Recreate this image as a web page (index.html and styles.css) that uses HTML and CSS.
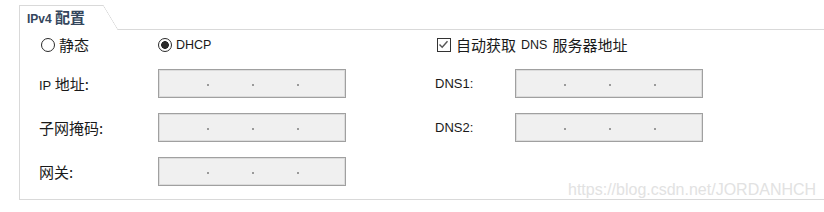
FILE: index.html
```html
<!DOCTYPE html>
<html lang="zh-CN">
<head>
    <meta charset="UTF-8">
    <meta name="viewport" content="width=device-width, initial-scale=1.0">
    <title>IPv4 配置</title>
    <link rel="stylesheet" href="styles.css">
</head>
<body>
    <div class="group">
        <div class="group-head">
            <div class="tab"><span class="en">IPv4</span> 配置</div>
            <div class="tab-slant"></div>
            <div class="head-line"></div>
        </div>
        <div class="group-body">
            <label class="option first">
                <span class="radio"></span>静态
            </label>
            <label class="option">
                <span class="radio checked"></span><span class="en">DHCP</span>
            </label>
            <span></span>
            <label class="option check-opt span-2">
                <span class="checkbox">
                    <svg viewBox="0 0 13 13" width="13" height="13"><polyline points="2.5,6.5 5.2,9.3 10.5,3.2" fill="none" stroke="#555" stroke-width="1.4"/></svg>
                </span>自动获取 <span class="en">DNS</span> 服务器地址
            </label>

            <span class="label"><span class="en">IP</span> 地址:</span>
            <div class="ip-box"><i></i><i></i><i></i></div>
            <span></span>
            <span class="label en">DNS1:</span>
            <div class="ip-box"><i></i><i></i><i></i></div>

            <span class="label">子网掩码:</span>
            <div class="ip-box"><i></i><i></i><i></i></div>
            <span></span>
            <span class="label en">DNS2:</span>
            <div class="ip-box"><i></i><i></i><i></i></div>

            <span class="label">网关:</span>
            <div class="ip-box"><i></i><i></i><i></i></div>
        </div>
    </div>
    <div class="watermark">https://blog.csdn.net/JORDANHCH</div>
</body>
</html>
```

FILE: styles.css
```css
body {
    margin: 0;
    background: #fff;
    color: #1a1a1a;
    font-family: 'Noto Sans CJK SC', sans-serif;
    font-size: 15px;
    position: relative;
    height: 212px;
    overflow: hidden;
}
.en {
    font-family: 'Liberation Sans', Arial, sans-serif;
    font-size: 12px;
}
.group {
    margin: 5px 0 0 19px;
}
.group-head {
    display: flex;
    height: 25px;
}
.tab {
    width: 76px;
    padding-left: 7px;
    border-top: 1px solid #d9d9d9;
    border-left: 1px solid #d9d9d9;
    font-weight: bold;
    color: #34465c;
    line-height: 22px;
}
.tab .en {
    font-size: 12px;
}
.tab-slant {
    width: 15px;
    height: 25px;
    background: linear-gradient(to top right, transparent calc(50% - 0.6px), #d9d9d9, transparent calc(50% + 0.6px));
}
.head-line {
    flex: 1;
    border-bottom: 1px solid #d9d9d9;
}
.group-body {
    border-left: 1px solid #d9d9d9;
    border-bottom: 1px solid #d9d9d9;
    padding: 6px 0 13px 19px;
    display: grid;
    grid-template-columns: 119px 188px 89px 80px 188px;
    grid-template-rows: 18px 29px 29px 29px;
    row-gap: 15px;
    align-items: center;
}
.option {
    display: flex;
    align-items: center;
    gap: 4px;
    line-height: 18px;
    white-space: nowrap;
}
.option.first {
    margin-left: 2px;
}
.option .en {
    font-size: 12.5px;
}
.check-opt {
    margin-left: 2px;
    gap: 5px;
}
.span-2 {
    grid-column: span 2;
}
.radio {
    width: 12px;
    height: 12px;
    border: 1.5px solid #2a2a2a;
    border-radius: 50%;
    box-sizing: content-box;
    flex: none;
}
.radio.checked {
    background: radial-gradient(circle, #2a2a2a 0 3.6px, transparent 4.1px);
}
.checkbox {
    width: 12px;
    height: 12px;
    border: 1px solid #333;
    flex: none;
    display: flex;
}
.checkbox svg {
    margin: -1px 0 0 -1px;
}
.label {
    white-space: nowrap;
}
.label .en {
    font-size: 13px;
}
.label.en {
    font-size: 13px;
}
.ip-box {
    height: 29px;
    box-sizing: border-box;
    border: 1px solid #a0a0a0;
    box-shadow: inset 0 0 0 1px #dcdcdc;
    background: #f0f0f0;
    display: flex;
    align-items: center;
    padding: 2px 0 0 48px;
    gap: 43px;
}
.ip-box i {
    width: 2px;
    height: 2px;
    background: #9a9a9a;
}
.watermark {
    position: absolute;
    left: 568px;
    top: 181px;
    font-family: 'Liberation Sans', Arial, sans-serif;
    font-size: 16px;
    color: #e2e2e2;
}
```
